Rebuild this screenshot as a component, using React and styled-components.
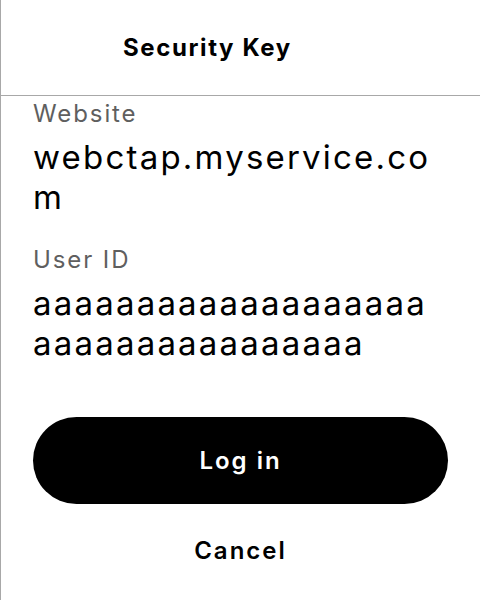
import React from 'react'
import styled, {createGlobalStyle} from 'styled-components'

const GlobalStyle = createGlobalStyle`
    html, body {
        margin: 0;
        padding: 0;
        background: #fff;
    }
    body {
        font-family: Inter, "Noto Sans", sans-serif;
        color: #000;
    }
`

function App() {
    return (
        <Screen>
            <GlobalStyle />
            <Header>
                <Title>Security Key</Title>
            </Header>
            <Body>
                <Field>
                    <Label>Website</Label>
                    <Value>webctap.myservice.com</Value>
                </Field>
                <Field>
                    <Label>User ID</Label>
                    <Value>aaaaaaaaaaaaaaaaaaaaaaaaaaaaaaaaaaa</Value>
                </Field>
                <Actions>
                    <PrimaryButton>Log in</PrimaryButton>
                    <TextButton>Cancel</TextButton>
                </Actions>
            </Body>
        </Screen>
    )
}

export default App

const Screen = styled.div`
    width: 480px;
    height: 600px;
    box-sizing: border-box;
    border-left: 1px solid #a8a8a8;
    display: flex;
    flex-direction: column;
    overflow: hidden;
`

const Header = styled.div`
    height: 96px;
    flex-shrink: 0;
    box-sizing: border-box;
    border-bottom: 1px solid #a8a8a8;
    display: flex;
    align-items: center;
    padding: 0 0 0 122px;
`

const Title = styled.h1`
    margin: 0;
    font-size: 24px;
    font-weight: 700;
    letter-spacing: 1.6px;
`

const Body = styled.div`
    padding: 2px 32px 0 32px;
    display: flex;
    flex-direction: column;
`

const Field = styled.div`
    display: flex;
    flex-direction: column;
    margin-bottom: 27px;
`

const Label = styled.div`
    font-size: 24px;
    line-height: 32px;
    letter-spacing: 1.9px;
    color: #5f5f5f;
    margin-bottom: 7px;
`

const Value = styled.div`
    font-size: 33px;
    line-height: 40px;
    letter-spacing: 2.2px;
    word-break: break-all;
    padding-right: 8px;
`

const Actions = styled.div`
    display: flex;
    flex-direction: column;
    align-items: stretch;
    margin-top: 27px;
`

const PrimaryButton = styled.button`
    height: 87px;
    border: none;
    border-radius: 44px;
    background: #000;
    color: #fff;
    font-family: inherit;
    font-size: 24px;
    font-weight: 600;
    letter-spacing: 2px;
`

const TextButton = styled.button`
    margin-top: 32px;
    height: 30px;
    line-height: 30px;
    padding: 0;
    border: none;
    background: none;
    color: #000;
    font-family: inherit;
    font-size: 24px;
    font-weight: 600;
    letter-spacing: 2px;
`
